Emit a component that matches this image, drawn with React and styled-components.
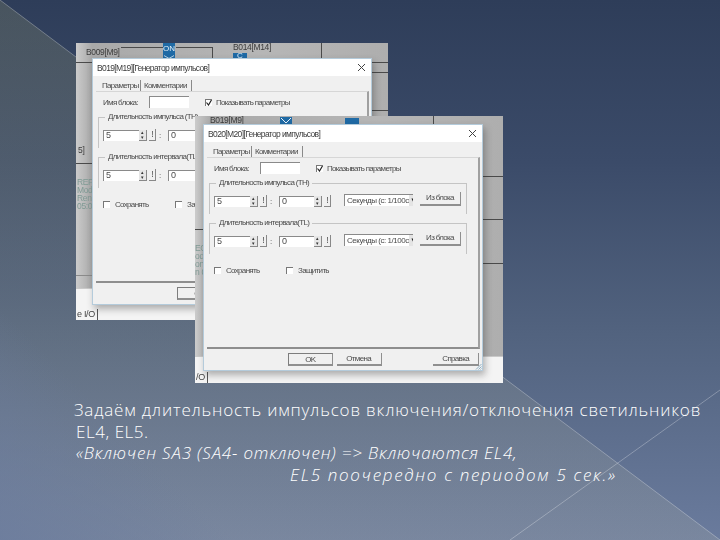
import React from "react";
import styled, { createGlobalStyle } from "styled-components";

const Global = createGlobalStyle`
  html, body { margin: 0; padding: 0; }
  body { width: 720px; height: 540px; overflow: hidden; }
`;

const Slide = styled.main`
  position: relative;
  width: 720px;
  height: 540px;
  overflow: hidden;
  box-sizing: border-box;
  padding: 399px 0 0 74px;
  background: linear-gradient(180deg, #2e3d59 0%, #3b4b69 30%, #52637f 62%, #6a7b9d 100%);
`;

const Backdrop = styled.svg`
  position: absolute;
  inset: 0;
  width: 720px;
  height: 540px;
`;

const Caption = styled.div`
  position: relative;
  font-family: "Open Sans", "Noto Sans", sans-serif;
  font-weight: 300;
  font-size: 17px;
  line-height: 21.5px;
  color: #fff;
  white-space: pre;
`;

const CaptionLine = styled.div`
  padding-left: ${(p) => p.$indent || 0}px;
  font-style: ${(p) => (p.$italic ? "italic" : "normal")};
  letter-spacing: ${(p) => p.$spacing || 0}px;
`;

const Screen = styled.section`
  position: absolute;
  left: ${(p) => p.$left}px;
  top: ${(p) => p.$top}px;
  width: ${(p) => p.$width}px;
  height: ${(p) => p.$height}px;
  overflow: hidden;
  background: linear-gradient(90deg, #cbcbcb 0, #a9a9a9 16px, #b6b6b6 60%, #aeaeae 100%);
  font-family: "Liberation Sans", Arial, sans-serif;
  color: #3f3f3f;
  filter: blur(0.4px);
`;

const Wire = styled.i`
  position: absolute;
  left: ${(p) => p.$x}px;
  top: ${(p) => p.$y}px;
  width: ${(p) => p.$w || 1}px;
  height: ${(p) => p.$h || 1}px;
  background: ${(p) => p.$color || "#4a4a4a"};
`;

const BlockLabel = styled.span`
  position: absolute;
  left: ${(p) => p.$x}px;
  top: ${(p) => p.$y}px;
  font-size: 8.5px;
  letter-spacing: -0.35px;
  line-height: ${(p) => p.$lh || 10}px;
  white-space: pre;
  color: ${(p) => p.$color || "#3c3c3c"};
`;

const BlueTag = styled.span`
  position: absolute;
  left: ${(p) => p.$x}px;
  top: ${(p) => p.$y}px;
  width: ${(p) => p.$w}px;
  height: ${(p) => p.$h}px;
  background: #1f6aa5;
  color: #e6f0f8;
  font-size: 8px;
  line-height: ${(p) => p.$h}px;
  text-align: center;
`;

const Chevron = styled.svg`
  display: block;
  width: 100%;
  height: 100%;
`;

const BottomStrip = styled.div`
  position: absolute;
  left: 0;
  right: 0;
  bottom: 0;
  height: ${(p) => p.$h}px;
  background: #f4f4f4;
  border-top: 1px solid #c9c9c9;
`;

const SheetTab = styled.span`
  position: absolute;
  left: 0;
  bottom: 0;
  padding: 0 2px 0 1px;
  font-size: 9px;
  letter-spacing: -0.3px;
  line-height: 11px;
  border-right: 1px solid #555;
  color: #444;
`;

const Dialog = styled.div`
  position: absolute;
  left: ${(p) => p.$x}px;
  top: ${(p) => p.$y}px;
  width: 280px;
  height: 247px;
  box-sizing: border-box;
  display: flex;
  flex-direction: column;
  background: #f0f0f0;
  border: 1px solid #b4cbdb;
  box-shadow: 2px 4px 7px rgba(40, 40, 40, 0.35);
  font-size: 8px;
  letter-spacing: -0.68px;
  color: #4b4b4b;
`;

const TitleBar = styled.header`
  flex: 0 0 17px;
  display: flex;
  align-items: center;
  justify-content: space-between;
  padding: 0 5px 0 4px;
  background: #fff;
  color: #3a3a3a;
  font-size: 8.5px;
  letter-spacing: -0.63px;
`;

const TabRow = styled.nav`
  flex: 0 0 15px;
  display: flex;
  align-items: flex-end;
  padding-left: 8px;
  box-sizing: border-box;
`;

const Tab = styled.span`
  height: 11px;
  line-height: 11px;
  width: ${(p) => p.$w}px;
  padding-left: 1px;
  margin-right: 2px;
  border-right: 1px solid #8a8a8a;
`;

const Panel = styled.div`
  flex: 1;
  margin: 0 2px 0 3px;
  box-sizing: border-box;
  padding: 4px 0 0 2px;
  border-top: 1px solid #d6d6d6;
  border-right: 2px solid #a0a0a0;
  border-bottom: 2px solid #8e8e8e;
`;

const NameRow = styled.div`
  height: 12px;
  display: flex;
  align-items: center;
  padding-left: 5px;
`;

const NameLabel = styled.label`
  width: 46px;
  white-space: nowrap;
`;

const TextBox = styled.span`
  display: block;
  box-sizing: border-box;
  width: ${(p) => p.$w}px;
  height: ${(p) => p.$h}px;
  line-height: ${(p) => p.$h - 2}px;
  padding-left: 2px;
  background: #fff;
  border-top: 1px solid #8a8a8a;
  border-left: 1px solid #8a8a8a;
  font-size: 9px;
`;

const CheckBox = styled.span`
  display: block;
  box-sizing: border-box;
  width: 7px;
  height: 7px;
  background: #fff;
  border-top: 1px solid #777;
  border-left: 1px solid #777;
  margin-right: ${(p) => p.$gap}px;
`;

const ShowParams = styled.div`
  display: flex;
  align-items: center;
  margin-left: 16px;
`;

const Group = styled.fieldset`
  box-sizing: border-box;
  margin: 4px 0 0 0;
  width: 258px;
  height: 36px;
  padding: 4px 0 0 4px;
  border: 1px solid #c4c4c4;
  border-bottom: none;
  min-width: 0;
`;

const GroupTitle = styled.legend`
  padding: 0 3px;
  margin-left: 2px;
  font-size: 8px;
  line-height: 10px;
`;

const FieldRow = styled.div`
  height: 15px;
  display: flex;
  align-items: flex-end;
`;

const Spinner = styled.span`
  display: flex;
  flex-direction: column;
  justify-content: space-between;
  align-items: center;
  width: 8px;
  height: 11px;
  box-sizing: border-box;
  background: #e6e6e6;
  border-right: 1px solid #888;
  border-bottom: 1px solid #888;
  font-size: 5px;
  line-height: 5px;
  letter-spacing: 0;
  color: #333;
`;

const BangButton = styled.span`
  box-sizing: border-box;
  width: 7px;
  height: 12px;
  margin-left: 2px;
  text-align: center;
  line-height: 11px;
  font-size: 8.5px;
  border-right: 1px solid #888;
  border-bottom: 1px solid #888;
`;

const Colon = styled.span`
  width: 12px;
  padding-left: 3px;
  box-sizing: border-box;
  line-height: 11px;
`;

const Combo = styled.span`
  box-sizing: border-box;
  width: 69px;
  height: 12px;
  margin: 0 0 1px 13px;
  display: flex;
  align-items: center;
  justify-content: space-between;
  overflow: hidden;
  white-space: nowrap;
  background: #fff;
  border-top: 1px solid #8a8a8a;
  border-left: 1px solid #8a8a8a;
  padding-left: 2px;
  font-size: 8px;
  letter-spacing: -0.45px;
`;

const ComboArrow = styled.span`
  flex: 0 0 8px;
  height: 100%;
  background: #e4e4e4;
  border-right: 1px solid #777;
  border-bottom: 1px solid #777;
  font-size: 6px;
  line-height: 10px;
  text-align: center;
  color: #222;
`;

const PushButton = styled.span`
  box-sizing: border-box;
  display: block;
  width: ${(p) => p.$w}px;
  height: ${(p) => p.$h}px;
  line-height: ${(p) => p.$h - 2}px;
  text-align: center;
  background: #f0f0f0;
  border-right: 1px solid #8f8f8f;
  border-bottom: 2px solid #8f8f8f;
  border-top: ${(p) => (p.$default ? "1px solid #7d7d7d" : "none")};
  border-left: ${(p) => (p.$default ? "1px solid #7d7d7d" : "none")};
`;

const BlockButton = styled(PushButton)`
  margin: 0 0 1px 7px;
  align-self: flex-start;
`;

const OptionsRow = styled.div`
  display: flex;
  align-items: center;
  padding-left: 5px;
  margin-top: 11px;
  height: 10px;
`;

const Option = styled.span`
  display: flex;
  align-items: center;
  width: 72px;
`;

const Footer = styled.footer`
  flex: 0 0 21px;
  display: flex;
  align-items: flex-start;
  padding: 4px 3px 0 84px;
  box-sizing: border-box;
  position: relative;
`;

const FooterGap = styled.span`
  width: ${(p) => p.$w}px;
`;

const Grip = styled.svg`
  position: absolute;
  right: 0;
  bottom: 0;
  width: 7px;
  height: 7px;
`;

const Spin = () => (
  <Spinner>
    <span>▴</span>
    <span>▾</span>
  </Spinner>
);

const Duration = ({ title }) => (
  <Group>
    <GroupTitle>{title}</GroupTitle>
    <FieldRow>
      <TextBox $w={36} $h={11}>5</TextBox>
      <Spin />
      <BangButton>!</BangButton>
      <Colon>:</Colon>
      <TextBox $w={35} $h={11}>0</TextBox>
      <Spin />
      <BangButton>!</BangButton>
      <Combo>
        Секунды (с: 1/100с
        <ComboArrow>▼</ComboArrow>
      </Combo>
      <BlockButton $w={41} $h={14}>Из блока</BlockButton>
    </FieldRow>
  </Group>
);

const BlockDialog = ({ x, y, title }) => (
  <Dialog $x={x} $y={y}>
    <TitleBar>
      <span>{title}</span>
      <svg width="9" height="9" viewBox="0 0 9 9" aria-hidden="true">
        <path d="M1 1l7 7M8 1l-7 7" stroke="#444" strokeWidth="1" fill="none" />
      </svg>
    </TitleBar>
    <TabRow>
      <Tab $w={38}>Параметры</Tab>
      <Tab $w={47}>Комментарии</Tab>
    </TabRow>
    <Panel>
      <NameRow>
        <NameLabel>Имя блока:</NameLabel>
        <TextBox $w={40} $h={12} />
        <ShowParams>
          <CheckBox $gap={4}>
            <svg width="6" height="6" viewBox="0 0 6 6" aria-hidden="true" style={{ display: "block" }}>
              <path d="M0.5 2.5l2 2.5 3-5" stroke="#222" strokeWidth="1.2" fill="none" />
            </svg>
          </CheckBox>
          Показывать параметры
        </ShowParams>
      </NameRow>
      <Duration title="Длительность импульса (TH)" />
      <Duration title="Длительность интервала(TL)" />
      <OptionsRow>
        <Option><CheckBox $gap={5} />Сохранять</Option>
        <Option><CheckBox $gap={5} />Защитить</Option>
      </OptionsRow>
    </Panel>
    <Footer>
      <PushButton $w={45} $h={13} $default>OK</PushButton>
      <FooterGap $w={4} />
      <PushButton $w={45} $h={13}>Отмена</PushButton>
      <FooterGap $w={52} />
      <PushButton $w={46} $h={13}>Справка</PushButton>
      <Grip viewBox="0 0 7 7" aria-hidden="true">
        <path d="M6.5 1L1 6.5M6.5 3.5L3.5 6.5M6.5 5.5L5.5 6.5" stroke="#8fb0c4" fill="none" />
      </Grip>
    </Footer>
  </Dialog>
);

const ChevronTag = ({ x, y, w, h }) => (
  <BlueTag $x={x} $y={y} $w={w} $h={h}>
    <Chevron viewBox="0 0 12 7" preserveAspectRatio="none" aria-hidden="true">
      <path d="M1 1l5 5 5-5" stroke="#e6f0f8" fill="none" />
    </Chevron>
  </BlueTag>
);

export default function App() {
  return (
    <Slide>
      <Global />
      <Backdrop viewBox="0 0 720 540" aria-hidden="true">
        <defs>
          <linearGradient id="veil" x1="0" y1="0" x2="0" y2="1">
            <stop offset="0" stopColor="#b2b275" stopOpacity="0.2" />
            <stop offset="0.55" stopColor="#b0b090" stopOpacity="0.14" />
            <stop offset="1" stopColor="#b8b8a8" stopOpacity="0.2" />
          </linearGradient>
          <linearGradient id="fade" x1="0" y1="1" x2="1" y2="0">
            <stop offset="0" stopColor="#6a7b9d" stopOpacity="0.75" />
            <stop offset="0.45" stopColor="#6a7b9d" stopOpacity="0" />
          </linearGradient>
        </defs>
        <polygon points="0,0 720,540 0,540" fill="url(#veil)" />
        <polygon points="0,280 260,540 0,540" fill="url(#fade)" />
        <line x1="0" y1="0" x2="720" y2="540" stroke="#fff" strokeOpacity="0.28" strokeWidth="1" />
        <line x1="720" y1="390" x2="510" y2="540" stroke="#fff" strokeOpacity="0.28" strokeWidth="1" />
      </Backdrop>

      <Screen $left={76} $top={43} $width={312} $height={277}>
        <BlockLabel $x={10} $y={4}>B009[M9]</BlockLabel>
        <Wire $x={45} $y={4} $w={42} />
        <BlueTag $x={87} $y={0} $w={12} $h={12}>ON</BlueTag>
        <ChevronTag x={87} y={12} w={12} h={4} />
        <Wire $x={100} $y={4} $w={36} />
        <Wire $x={136} $y={4} $w={1} $h={11} />
        <BlockLabel $x={157} $y={-1}>B014[M14]</BlockLabel>
        <BlueTag $x={157} $y={10} $w={14} $h={6}>C</BlueTag>
        <Wire $x={245} $y={0} $w={1} $h={15} />
        <Wire $x={0} $y={19} $w={16} />
        <Wire $x={295} $y={19} $w={17} />
        <Wire $x={295} $y={29} $w={17} />
        <Wire $x={295} $y={67} $w={17} />
        <Wire $x={0} $y={120} $w={16} />
        <Wire $x={0} $y={232} $w={16} $color="#8a8a8a" />
        <BlockLabel $x={2} $y={102}>5]</BlockLabel>
        <BlockLabel $x={1} $y={135} $lh={8} $color="#7f9a94">{"REF\nMod\nRen\n05:0"}</BlockLabel>
        <BottomStrip $h={31} />
        <SheetTab>e I/O</SheetTab>
        <BlockDialog x={16} y={15} title="B019[M19][Генератор импульсов]" />
      </Screen>

      <Screen $left={195} $top={116} $width={308} $height={267}>
        <BlockLabel $x={15} $y={-1}>B019[M9]</BlockLabel>
        <ChevronTag x={85} y={1} w={12} h={7} />
        <BlueTag $x={150} $y={2} $w={14} $h={6} />
        <Wire $x={238} $y={0} $w={1} $h={8} />
        <Wire $x={288} $y={60} $w={20} />
        <Wire $x={288} $y={103} $w={20} />
        <Wire $x={288} $y={147} $w={20} />
        <Wire $x={0} $y={113} $w={8} />
        <BlockLabel $x={0} $y={128} $lh={8} $color="#7f9a94">{"EC\nod\non\nn 0"}</BlockLabel>
        <BottomStrip $h={26} />
        <SheetTab>/O</SheetTab>
        <BlockDialog x={8} y={8} title="B020[M20][Генератор импульсов]" />
      </Screen>

      <Caption>
        <CaptionLine $spacing={0.82}>Задаём длительность импульсов включения/отключения светильников</CaptionLine>
        <CaptionLine $indent={2} $spacing={0.55}>EL4, EL5.</CaptionLine>
        <CaptionLine $indent={2} $italic $spacing={0.82}>«Включен SA3 (SA4- отключен) =&gt; Включаются EL4,</CaptionLine>
        <CaptionLine $indent={216} $italic $spacing={1.7}>EL5 поочередно с периодом 5 сек.»</CaptionLine>
      </Caption>
    </Slide>
  );
}
